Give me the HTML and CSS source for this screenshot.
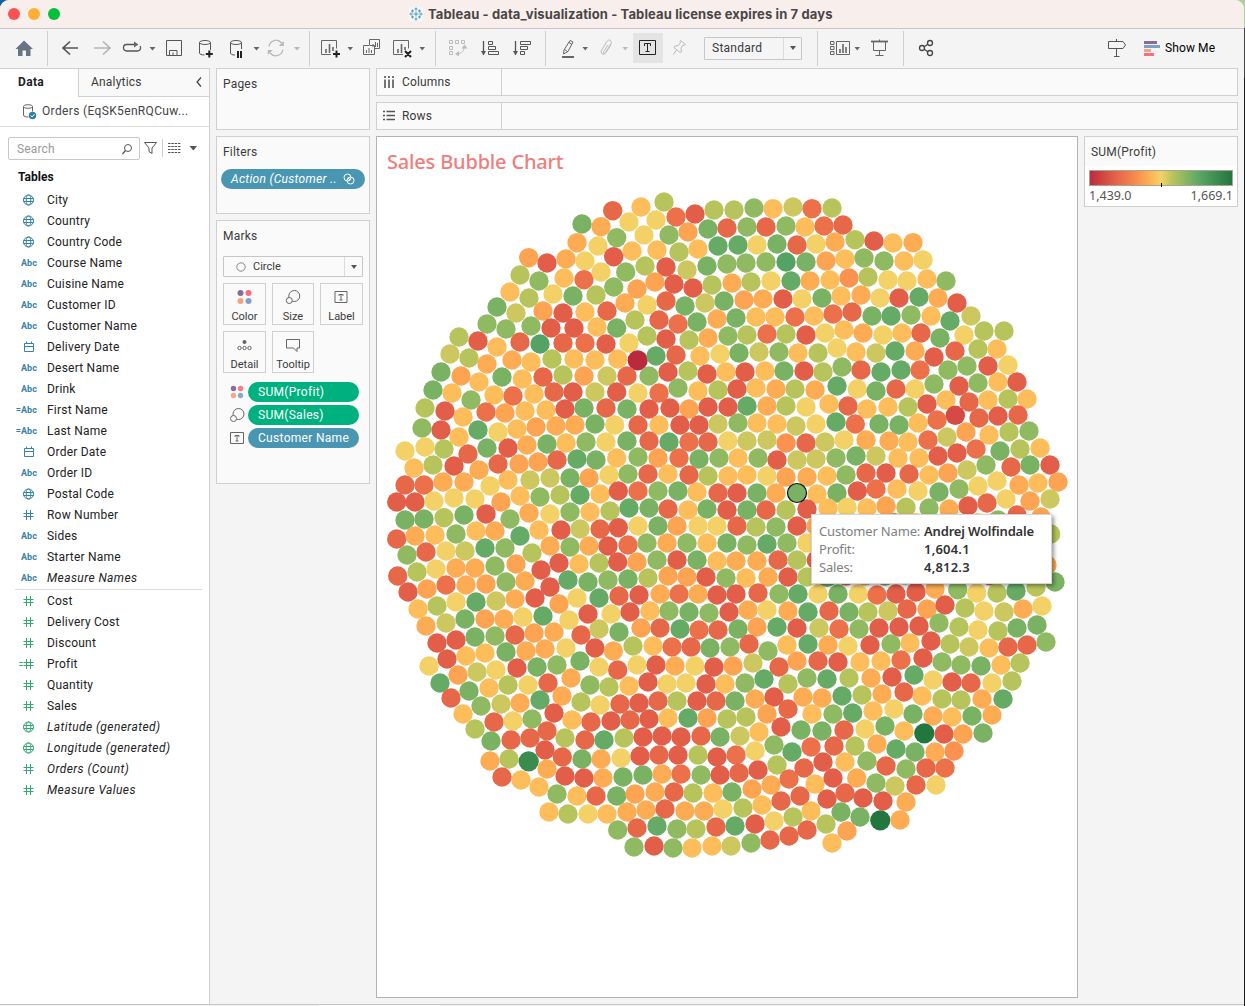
FILE: index.html
```html
<!DOCTYPE html>
<html lang="en">
<head>
<meta charset="utf-8">
<title>Tableau - data_visualization</title>
<link rel="stylesheet" href="styles.css">
</head>
<body>
<svg class="defs" width="0" height="0">
  <symbol id="globe" viewBox="0 0 20 21"><g fill="none" stroke="currentColor"><circle cx="10.500" cy="11" r="5"/><ellipse cx="10.500" cy="11" rx="2.300" ry="5"/><path d="M5.500 9.500h10M5.500 12.500h10"/></g></symbol>
  <symbol id="cal" viewBox="0 0 20 21"><path d="M6.500 7.500h9v8h-9zM6.500 10.500h9M8.500 5.500v2M13.500 5.500v2" fill="none" stroke="currentColor"/></symbol>
  <symbol id="hash" viewBox="0 0 20 21"><path d="M8.500 6v10M12.500 6v10M5.500 9.500h10M5.500 12.500h10" fill="none" stroke="currentColor"/></symbol>
  <symbol id="eqhash" viewBox="0 0 20 21"><path d="M8.500 6v10M12.500 6v10M5.500 9.500h10M5.500 12.500h10M1.500 9.500h3M1.500 12.500h3" fill="none" stroke="currentColor"/></symbol>
</svg>
<div class="window">
  <header class="titlebar">
    <svg viewBox="0 0 80 28" width="80" height="28"><circle cx="14" cy="14" r="6" fill="#ff5151"/><circle cx="34" cy="14" r="6" fill="#ffae33"/><circle cx="54" cy="14" r="6" fill="#00c039"/></svg>
    <div class="caption">
      <svg viewBox="0 0 14 14" width="14" height="14"><rect width="14" height="14" fill="#f4f6f7"/><g stroke="#4f9fc0"><path d="M7 4.500v5M4.500 7h5M7 .500v3M5.500 2h3M7 10.500v3M5.500 12h3M2 5.500v3M.500 7h3M12 5.500v3M10.500 7h3M3.500 2.500v3M2 4h3M10.500 2.500v3M9 4h3M3.500 8.500v3M2 10h3M10.500 8.500v3M9 10h3"/></g></svg>
      <span class="caption-text">Tableau - data_visualization - Tableau license expires in 7 days</span>
    </div>
  </header>

  <nav class="toolbar">
    <svg viewBox="0 29 47 39" width="47" height="39"><path d="M24 40.500l9 8.500h-2.500v7H26v-5.500h-3.500V56H18v-7h-2.500z" fill="#687383"/></svg>
    <i class="sep"></i>
    <svg viewBox="48 29 261 39" width="261" height="39">
      <g fill="none" stroke="#555">
        <path d="M70 41.500L63 48l7 6.500M63 48h15" stroke-width="1.700"/>
        <path d="M103 41.500l7 6.500-7 6.500M110 48H94" stroke="#b5b5b5" stroke-width="1.700"/>
        <path d="M135 44.500h-8.500a3 3.200 0 0 0 0 6.500H137.500c3 0 3.800-3 2.500-5" stroke-width="1.300"/>
        <path d="M166.500 40.500h15v15h-15zM169.500 55.500v-5h7.500v5M173 52.500v3"/>
        <ellipse cx="205" cy="42.500" rx="5.500" ry="2"/><path d="M199.500 42.500V53c0 1.200 2 2 5 2M210.500 42.500V50"/>
        <ellipse cx="236" cy="42.500" rx="5.500" ry="2"/><path d="M230.500 42.500V53c0 1.200 1.500 2 4.500 2M241.500 42.500V49"/>
        <path d="M209.300 50.500v7M205.800 54h7" stroke="#222" stroke-width="2"/>
        <path d="M238 51v7M241 51v7" stroke="#222" stroke-width="2"/>
        <path d="M269 46.500a7 7 0 0 1 12.500-3.500M282.800 49.500a7 7 0 0 1-12.500 3.500" stroke="#b8b8b8" stroke-width="1.300"/>
      </g>
      <path d="M134 41.500v6l4.500-3zM149.500 47h6l-3 3.500zM253.500 47h6l-3 3.500z" fill="#666"/>
      <path d="M294 47h6l-3 3.500zM283.800 41v5h-5zM267.800 55v-5h5z" fill="#b8b8b8"/>
    </svg>
    <i class="sep"></i>
    <svg viewBox="310 29 125 39" width="125" height="39">
      <g fill="none" stroke="#666">
        <path d="M331 54.500h-9.500v-14h15v8"/><path d="M403 54.500h-9.500v-14h15v8"/>
        <path d="M326 49v4M329.500 44v9M333 47v4M398 49v4M401.500 44v9M405 47v3" stroke-width="1.600"/>
        <path d="M369.500 45v-5.500h10v9h-5M369 45.500h-5.500v9h11v-9h-5"/>
        <path d="M366.500 50v3M369 48v5M371.500 50v3M373 44v3M375.500 42v5M377.500 43v4"/>
        <path d="M336.500 50.500v7M333 54h7M405 51l6 6M411 51l-6 6" stroke="#222" stroke-width="2"/>
      </g>
      <path d="M347.500 47h5.500l-2.800 3.500zM419.500 47h5.500l-2.800 3.500z" fill="#666"/>
    </svg>
    <i class="sep"></i>
    <svg viewBox="436 29 109 39" width="109" height="39">
      <g fill="none" stroke="#bbb"><path d="M449.500 40.500h3v3h-3zM455.500 40.500h3v3h-3zM461.500 40.500h3v3h-3zM449.500 46.500h3v3h-3zM449.500 51.500h3v3h-3zM464 47c0 4-2 6.500-7 7"/></g>
      <path d="M464.500 44.500l3 4h-6zM455 54l4-3v5.500z" fill="#bbb"/>
      <g fill="none" stroke="#555"><path d="M483.500 41v12M515.500 41v12" stroke-width="1.300"/><path d="M488.500 41.500h4v3h-4zM488.500 46.500h7v3h-7zM488.500 51.500h10v3h-10zM520.500 41.500h10v3h-10zM520.500 46.500h7v3h-7zM520.500 51.500h4v3h-4z"/></g>
      <path d="M481 51h5l-2.500 4.500zM513 51h5l-2.500 4.500z" fill="#555"/>
    </svg>
    <i class="sep"></i>
    <svg viewBox="546 29 87 39" width="87" height="39">
      <g fill="none" stroke="#666"><path d="M564 50l6-9.500 3 1.500-5 9.500-4.500 2.500zM564.500 49.500l3 2M569 42.500l3 2"/><path d="M562 57h12" stroke-width="2"/>
      <path d="M608 45l-4.500 7c-1 1.500.800 2.500 1.800 1l5.500-9c2-3.500-2-5.500-4-2.500l-4.800 8c-2.500 4 1.500 6.500 4 3l5-8" stroke="#bbb"/></g>
      <path d="M582.500 47h5.500l-2.800 3.500z" fill="#666"/><path d="M622.500 47h5.500l-2.800 3.500z" fill="#bbb"/>
    </svg>
    <svg class="pressed" viewBox="633 33 30 30" width="30" height="30"><path d="M639.500 40.500h16v14h-16z" fill="none" stroke="#222"/><path d="M644.500 46v-2.500h6V46M647.500 43.500v8M645.500 51.500h4" fill="none" stroke="#222"/></svg>
    <svg viewBox="663 29 41 39" width="41" height="39"><path d="M680.500 40.500l5 4-1.500 1-1-.500-2 3 .500 4-1.500.500-6-5 .500-1.300 4-.700 2-3-.500-1zM676.500 50l-3 4.500" fill="none" stroke="#bbb"/></svg>
    <div class="select fit"><span>Standard</span><i class="drop"></i></div>
    <i class="sep gap"></i>
    <svg viewBox="818 29 85 39" width="85" height="39">
      <g fill="none" stroke="#666"><path d="M830.500 41.500h3.500v3h-3.500zM830.500 46.500h3.500v3h-3.500zM830.500 51.500h3.500v3h-3.500zM836.500 41.500h13v13h-13z"/><path d="M840 49v4M843 44v9M846 47v6" stroke-width="1.600"/>
      <path d="M871 41.500h17" stroke-width="1.800"/><path d="M873.500 42v8.500h12V42M879.500 39.500v2M879.500 50.500v5M875.500 55.500h8"/></g>
      <path d="M854.500 47h5.500l-2.800 3.500z" fill="#666"/>
    </svg>
    <i class="sep"></i>
    <svg viewBox="904 29 60 39" width="60" height="39"><g fill="none" stroke="#444" stroke-width="1.300"><circle cx="930" cy="43" r="2.500"/><circle cx="922" cy="48" r="2.500"/><circle cx="930" cy="53" r="2.500"/><path d="M924.200 46.700l3.600-2.400M924.200 49.300l3.600 2.400"/></g></svg>
    <div class="grow"></div>
    <svg viewBox="1104 29 60 39" width="60" height="39"><path d="M1108.500 41.500h14.500l2.500 3.500-2.500 3.500h-14.500zM1116.500 39v2.500M1116.500 48.500v8M1114 56.500h5.500" fill="none" stroke="#555"/><path d="M1144 41h13v3h-13z" fill="#866e97"/><path d="M1144 45h16v3h-16z" fill="#7f9fca"/><path d="M1144 49h7v3h-7z" fill="#f5a280"/><path d="M1144 53h10v3h-10z" fill="#f96d7c"/></svg>
    <span class="showme">Show Me</span>
  </nav>

  <main class="workspace">
    <aside class="sidebar">
      <div class="tabs"><b class="tab on">Data</b><div class="tab"><span>Analytics</span><svg viewBox="0 0 8 12" width="8" height="12"><path d="M6 1.500L2 6l4 4.500" fill="none" stroke="#444" stroke-width="1.200"/></svg></div></div>
      <div class="source">
        <svg viewBox="20 98 18 26" width="18" height="26"><g fill="none" stroke="#666"><ellipse cx="28" cy="106.500" rx="4.500" ry="1.800"/><path d="M23.500 106.500V115c0 1.500 2 2 5 2M32.500 106.500v5"/></g><circle cx="32.500" cy="115.500" r="3.700" fill="#2f7fa6"/><path d="M30.700 115.500l1.400 1.500 2.400-2.800" fill="none" stroke="#fff"/></svg>
        <span class="source-name">Orders (EqSK5enRQCuw...</span>
      </div>
      <div class="find">
        <div class="search"><span>Search</span><svg viewBox="0 0 12 12" width="12" height="12"><circle cx="7" cy="5" r="3.500" fill="none" stroke="#555"/><path d="M4.500 7.500L1.500 11" stroke="#555" stroke-width="1.300"/></svg></div>
        <svg viewBox="140 137 69 23" width="69" height="23"><path d="M144.500 142.500h12l-4.500 5.500v5.500l-3-2V148z" fill="none" stroke="#555"/><path d="M162.500 139v18" stroke="#ccc"/><path d="M168 143.500h12.500M168 146.500h12.500M168 149.500h12.500M168 152.500h12.500" stroke="#555" stroke-width="1.100" stroke-dasharray="2.500 .800"/><path d="M189.500 146h7.500l-3.700 4.500z" fill="#555"/></svg>
      </div>
      <div class="fields">
        <b class="group">Tables</b>
        <ul class="dims">
          <li><svg><use href="#globe"/></svg>City</li>
          <li><svg><use href="#globe"/></svg>Country</li>
          <li><svg><use href="#globe"/></svg>Country Code</li>
          <li><b>Abc</b>Course Name</li>
          <li><b>Abc</b>Cuisine Name</li>
          <li><b>Abc</b>Customer ID</li>
          <li><b>Abc</b>Customer Name</li>
          <li><svg><use href="#cal"/></svg>Delivery Date</li>
          <li><b>Abc</b>Desert Name</li>
          <li><b>Abc</b>Drink</li>
          <li><b>=Abc</b>First Name</li>
          <li><b>=Abc</b>Last Name</li>
          <li><svg><use href="#cal"/></svg>Order Date</li>
          <li><b>Abc</b>Order ID</li>
          <li><svg><use href="#globe"/></svg>Postal Code</li>
          <li><svg><use href="#hash"/></svg>Row Number</li>
          <li><b>Abc</b>Sides</li>
          <li><b>Abc</b>Starter Name</li>
          <li class="it"><b>Abc</b>Measure Names</li>
        </ul>
        <ul class="measures">
          <li><svg><use href="#hash"/></svg>Cost</li>
          <li><svg><use href="#hash"/></svg>Delivery Cost</li>
          <li><svg><use href="#hash"/></svg>Discount</li>
          <li><svg><use href="#eqhash"/></svg>Profit</li>
          <li><svg><use href="#hash"/></svg>Quantity</li>
          <li><svg><use href="#hash"/></svg>Sales</li>
          <li class="it"><svg><use href="#globe"/></svg>Latitude (generated)</li>
          <li class="it"><svg><use href="#globe"/></svg>Longitude (generated)</li>
          <li class="it"><svg><use href="#hash"/></svg>Orders (Count)</li>
          <li class="it"><svg><use href="#hash"/></svg>Measure Values</li>
        </ul>
      </div>
    </aside>

    <section class="cards">
      <div class="card pages"><h3>Pages</h3></div>
      <div class="card filters"><h3>Filters</h3>
        <div class="pill blue action"><em>Action (Customer ..</em><svg viewBox="0 0 12 12" width="12" height="12"><g fill="none" stroke="#fff"><circle cx="4.500" cy="4.500" r="3.500"/><circle cx="7.500" cy="7.500" r="3.500"/><path d="M4.500 6.500l2-2M5.500 7.500l2-2"/></g></svg></div>
      </div>
      <div class="card marks"><h3>Marks</h3>
        <div class="select mark-type"><svg viewBox="0 0 10 10" width="10" height="10"><circle cx="5" cy="5" r="4.200" fill="none" stroke="#888"/></svg><span>Circle</span><i class="drop"></i></div>
        <div class="props">
          <div class="prop"><svg viewBox="0 0 16 16" width="16" height="16"><circle cx="3.500" cy="4" r="3" fill="#866e97"/><circle cx="11.500" cy="4" r="3" fill="#f96d7c"/><circle cx="3.500" cy="12" r="3" fill="#f5a280"/><circle cx="11.500" cy="12" r="3" fill="#7f9fca"/></svg><span>Color</span></div>
          <div class="prop"><svg viewBox="0 0 16 16" width="16" height="16"><g fill="#fafafa" stroke="#666"><circle cx="9.300" cy="7" r="5.500"/><circle cx="4.300" cy="11.500" r="3"/></g></svg><span>Size</span></div>
          <div class="prop"><svg viewBox="0 0 16 16" width="16" height="16"><path d="M1 2.500h12v11h-12zM5 7V5.500h4V7M7 5.500v5.500M5.500 11h3" fill="none" stroke="#666"/></svg><span>Label</span></div>
          <div class="prop"><svg viewBox="0 0 16 16" width="16" height="16"><g fill="none" stroke="#666"><circle cx="2.500" cy="11" r="1.700"/><circle cx="7.500" cy="11" r="1.700"/><circle cx="12.500" cy="11" r="1.700"/></g><circle cx="7.500" cy="5" r="2" fill="#666"/></svg><span>Detail</span></div>
          <div class="prop"><svg viewBox="0 0 16 16" width="16" height="16"><path d="M1.500 2.500h13v8.500h-2.500v3.500L8.500 11h-7z" fill="none" stroke="#666"/></svg><span>Tooltip</span></div>
        </div>
        <div class="encodings">
          <div class="enc"><svg viewBox="0 0 16 16" width="16" height="16"><circle cx="4.500" cy="4.500" r="2.700" fill="#866e97"/><circle cx="11.500" cy="4.500" r="2.700" fill="#f97a88"/><circle cx="4.500" cy="11.500" r="2.700" fill="#f5a98a"/><circle cx="11.500" cy="11.500" r="2.700" fill="#8aaace"/></svg><div class="pill green">SUM(Profit)</div></div>
          <div class="enc"><svg viewBox="0 0 16 16" width="16" height="16"><g fill="#fafafa" stroke="#666"><circle cx="9.500" cy="7" r="5.500"/><circle cx="4.500" cy="11.500" r="3"/></g></svg><div class="pill green">SUM(Sales)</div></div>
          <div class="enc"><svg viewBox="0 0 16 16" width="16" height="16"><path d="M1.500 2.500h13v11h-13zM6 7V5.500h4V7M8 5.500v5.500M6.500 11h3" fill="none" stroke="#666"/></svg><div class="pill blue">Customer Name</div></div>
        </div>
      </div>
    </section>

    <section class="main">
      <div class="shelf"><div class="shelf-label"><svg viewBox="0 0 12 12" width="12" height="12"><path d="M2 3.500v8.500M6 3.500v8.500M10 3.500v8.500M2 0v2M6 0v2M10 0v2" stroke="#555" stroke-width="1.600"/></svg>Columns</div></div>
      <div class="shelf"><div class="shelf-label"><svg viewBox="0 0 12 12" width="12" height="12"><path d="M3.500 1.500H12M3.500 5.500H12M3.500 9.500H12M0 1.500h2M0 5.500h2M0 9.500h2" stroke="#555" stroke-width="1.600"/></svg>Rows</div></div>
      <div class="canvas">
        <div class="viz">
          <h1>Sales Bubble Chart</h1>
          <svg id="bubbles" class="bubbles" viewBox="380 185 697 690"></svg>
          <dl class="tip">
            <dt>Customer Name:</dt><dd class="who">Andrej Wolfindale</dd>
            <dt>Profit:</dt><dd>1,604.1</dd>
            <dt>Sales:</dt><dd>4,812.3</dd>
          </dl>
        </div>
        <div class="legend"><h3>SUM(Profit)</h3><div class="ramp"><i class="tick"></i></div><div class="range"><span>1,439.0</span><span>1,669.1</span></div></div>
      </div>
    </section>
  </main>
  <footer class="sheets"><i></i></footer>
</div>
<script src="bubbles.js"></script>
</body>
</html>
```
FILE: styles.css
```css
* { box-sizing: border-box; }
body { margin: 0; width: 1245px; height: 1006px; overflow: hidden; font: 12px/16px Roboto, "Liberation Sans", sans-serif; color: #3a3a3a; background: linear-gradient(90deg, #1264a0 0 20px, transparent 20px), linear-gradient(#a9d39c 0 28px, #444 28px 78px, #1b1b1b 78px); }
h1, h3, ul, dl, dd { margin: 0; padding: 0; font-weight: normal; }
.defs { position: absolute; }
svg { display: block; flex: none; }
.window { width: 1244px; height: 1006px; background: #f4f4f4; border-radius: 9px 9px 0 0; overflow: hidden; display: flex; flex-direction: column; }
.titlebar { height: 29px; flex: none; background: #f8efec; border-bottom: 1px solid #c9c5c4; display: flex; }
.caption { flex: 1; padding: 0 0 0 329px; display: flex; align-items: center; gap: 5px; }
.caption-text { font: bold 13px/16px Inter, sans-serif; letter-spacing: .12px; color: #494645; white-space: nowrap; padding-bottom: 1px; }
.toolbar { height: 39px; flex: none; display: flex; align-items: center; }
.sep { width: 1px; height: 35px; background: #cfcfcf; flex: none; }
.gap { margin-left: 15px; }
.pressed { background: #e4e4e4; margin-bottom: 1px; }
.select { border: 1px solid #c6c6c6; background: #fafafa; border-radius: 1px; display: flex; align-items: center; }
.fit { width: 98px; height: 23px; flex: none; background: #f5f5f5; padding: 0 0 0 7px; margin-bottom: 1px; }
.select span { flex: 1; letter-spacing: .25px; }
.drop { width: 18px; height: 100%; border-left: 1px solid #dcdcdc; display: flex; align-items: center; justify-content: center; }
.drop::after { content: ""; border: 3.500px solid transparent; border-top: 4px solid #555; border-bottom: 0; }
.grow { flex: 1; }
.showme { width: 80px; padding: 0 0 1px 1px; color: #000; letter-spacing: .1px; }
.workspace { flex: 1; display: flex; min-height: 0; }
.sidebar { width: 210px; flex: none; background: #fff; border-right: 1px solid #cfcfcf; border-top: 1px solid #cfcfcf; }
.tabs { display: flex; height: 28px; }
.tab { flex: 1; display: flex; align-items: center; justify-content: space-between; padding: 0 6px 1px 12px; border-left: 1px solid #d0d0d0; border-bottom: 1px solid #d0d0d0; background: #f9f9f9; letter-spacing: .2px; }
.tab.on { flex: 0 0 78px; padding: 0 0 3px 18px; background: #fff; border: 0; color: #222; justify-content: flex-start; letter-spacing: .35px; }
.source { height: 30px; border-bottom: 1px solid #ddd; display: flex; align-items: center; padding: 0 0 1px 20px; gap: 4px; color: #444; letter-spacing: .35px; }
.find { display: flex; padding: 10px 0 0 8px; }
.search { width: 132px; height: 23px; border: 1px solid #c8c8c8; border-radius: 2px; display: flex; align-items: center; justify-content: space-between; padding: 0 6px 0 8px; color: #999; letter-spacing: .15px; }
.group { display: block; padding: 9px 0 4px 18px; color: #111; line-height: 16px; }
.dims, .measures { list-style: none; }
.dims { color: #3783a8; }
.measures { color: #35a878; border-top: 1px solid #dcdcdc; margin: 1px 7px 0 15px; }
.fields li { height: 21px; display: flex; align-items: center; white-space: nowrap; letter-spacing: .22px; -webkit-text-fill-color: #222; }
.fields li svg { width: 20px; height: 21px; margin: 0 9px 0 18px; }
.measures li svg { margin-left: 3px; }
.fields li b { width: 37px; margin-right: 10px; text-align: right; font: bold 9px/21px Roboto, sans-serif; padding-top: 1px; letter-spacing: .1px; -webkit-text-fill-color: #3783a8; }
.fields li.it { font-style: italic; letter-spacing: .42px; }
.cards { width: 166px; flex: none; padding: 0 6px; display: flex; flex-direction: column; gap: 6px; }
.card { border: 1px solid #cfcfcf; background: #fafafa; padding: 7px 6px; flex: none; }
h3 { font-size: 12px; line-height: 16px; letter-spacing: .2px; }
.pages { height: 62px; }
.filters { height: 78px; }
.marks { height: 264px; }
.pill { height: 20px; border-radius: 10px; color: #fff; line-height: 20px; padding-left: 10px; white-space: nowrap; letter-spacing: .3px; }
.blue { background: #4996b3; }
.green { background: #00b180; }
.action { margin: 9px -2px 0; width: 144px; display: flex; align-items: center; justify-content: space-between; padding-right: 10px; }
.mark-type { height: 21px; margin-top: 12px; font-size: 11px; width: 140px; padding-left: 12px; gap: 7px; }
.mark-type span { letter-spacing: 0; }
.props { display: grid; grid-template-columns: 43px 42px 43px; gap: 6px; margin-top: 6px; width: 140px; }
.prop { height: 42px; border: 1px solid #cfcfcf; display: flex; flex-direction: column; align-items: center; padding-top: 5px; font-size: 11px; line-height: 14px; gap: 5px; }
.encodings { margin-top: 9px; display: grid; gap: 3px; padding-left: 6px; }
.enc { display: flex; align-items: center; gap: 3px; }
.enc .pill { width: 111px; }
.main { flex: 1; display: flex; flex-direction: column; gap: 6px; padding-right: 6px; min-width: 0; }
.shelf { height: 28px; flex: none; border: 1px solid #cfcfcf; background: #fafafa; }
.shelf-label { width: 125px; height: 26px; border-right: 1px solid #cfcfcf; display: flex; align-items: center; gap: 7px; padding-left: 6px; letter-spacing: .15px; }
.canvas { display: flex; gap: 6px; }
.viz { width: 702px; height: 862px; border: 1px solid #b3b3b3; background: #fff; position: relative; }
.viz h1 { font: 500 20px/28px "Noto Sans", sans-serif; letter-spacing: -.18px; color: #f07c7c; padding: 11px 0 0 10px; height: 48px; }
.bubbles { margin-left: 3px; width: 697px; height: 690px; }
.tip { position: absolute; left: 434px; top: 377px; width: 241px; height: 70px; border: 1px solid #d4d4d4; background: #fff; box-shadow: 2px 2px 4px rgba(0,0,0,.4); padding: 7px 0 0 7px; display: grid; grid-template-columns: 105px 1fr; grid-auto-rows: 18px; font: 13px/18px "Noto Sans", sans-serif; white-space: nowrap; }
.tip dt { color: #808080; letter-spacing: -.16px; }
.tip dd { color: #333; font-weight: 600; letter-spacing: .2px; }
.tip .who { letter-spacing: -.17px; }
.legend { width: 154px; height: 71px; border: 1px solid #cfcfcf; background: linear-gradient(#fafafa 29px, #fff 29px); padding: 7px 4px 0; }
.legend h3 { padding-left: 2px; }
.ramp { height: 16px; margin-top: 10px; width: 144px; border: 1px solid #a9a595; position: relative; background: linear-gradient(90deg, #be2a3e, #e25f48 17%, #f88f4d 33%, #fdb456 43%, #f4d166 50%, #b9c45c 58%, #90b960 66%, #57a565 78%, #22763f); }
.tick { position: absolute; left: 71px; top: 12px; width: 1px; height: 4px; background: #000; }
.range { display: flex; justify-content: space-between; font: 12.500px/20px "Noto Sans", sans-serif; color: #555; width: 144px; }
.sheets { height: 2px; flex: none; border-top: 1px solid #c4c4c4; padding-left: 318px; }
.sheets i { display: block; width: 122px; height: 1px; background: #fff; }
```
FILE: bubbles.js
```js
// Packed bubbles, grouped by block. Positions are in thirds of a pixel from the
// block's origin, followed by the letter of the colour step.
const ramp = {
  A: '#bb293d', B: '#d64a45', C: '#e25e48', E: '#e76848', F: '#ec7049', H: '#fb9250',
  I: '#fca452', J: '#fdac54', K: '#fdbd5b', Y: '#f3d166', L: '#ccc75f', M: '#b7c45b',
  N: '#8fba61', P: '#7ab263', Q: '#66ab65', S: '#55a265', T: '#3a8b50', U: '#22773f'
};
const blocks = [
[380, 185, `698,77E 606,117P 663,125J 591,173J 654,183Y 446,218I 501,234C 558,222J 615,228Y 701,215C
420,270M 477,288N 552,279K 612,284F 663,261Y 390,321K 447,339M 519,327Y 579,333P 648,330M 701,306N
351,366P 408,384L 489,378I 549,384C 615,381K 681,378E 321,417N 378,432N 453,423N 513,429C 582,429C 651,426K
237,456M 294,468C 351,486K 420,471E 480,477S 549,474E 615,474F 678,477C
210,507L 267,519M 321,537J 396,525J 453,531K 516,522M 582,522K 645,525K
183,561P 243,573I 297,591K 366,576P 427,582K 489,576E 549,570M 612,573I 681,573L
159,615P 216,624K 273,645N 342,630K 399,633F 462,627K 522,621E 579,621C 645,621L
135,669M 195,678C 249,696K 318,681F 375,684I 435,678K 498,675K 555,672C 612,669P 678,669E
126,729N 183,735C 237,756K 294,735Q 354,741Y 411,732K 468,726I 528,723J 585,720J 645,717P 704,720Y
75,798Y 135,786Y 192,792M 264,807E 321,789P 384,789C 441,780J 501,777P 558,774K 618,771N 678,771Y
102,849K 159,840M 222,843C 297,855J 354,837E 417,837I 474,831I 531,825E 591,822Q 648,825P
75,900E 132,900F 189,891J 252,891J 330,903Y 384,885K 450,885L 510,879L 570,879P 627,879I 687,870Y
50,951C 105,951C 162,948Y 222,939Y 285,942Y 363,951I 420,933K 480,936N 540,930M 600,930Q 660,927K
75,1005P 132,1002P 192,998M 252,990P 318,987C 390,1002N 447,984J 510,987Y 570,981N 630,981K 690,978M`],
[615, 185, `147,51M 78,66K 183,96F 240,87C 297,75M 357,75M 417,69N 474,71K 534,66L 591,71F 651,69M
42,111Y 123,105Y 5,158N 87,150Y 162,150N 219,141I 279,132P 336,129E 396,126N 453,126E 513,123N 570,126K 627,123F 684,120E
51,198K 126,195K 192,201M 249,192K 309,183Q 369,180Q 426,180Y 486,177P 546,180E 603,177Y 660,171J
32,261N 90,243M 153,246C 216,255L 276,243P 336,237N 393,234N 453,231N 513,231S 573,231P 633,228I 690,222K
66,312I 120,291I 177,297C 234,309C 291,300M 351,294J 408,291M 468,288Y 528,288Q 585,288J 645,285K 702,279H
30,354J 96,360Y 153,348E 210,363P 270,354L 327,348P 387,345I 444,342J 504,342C 561,342Y 621,339P 678,333K
5,429P 60,405M 132,405E 189,417F 246,411P 306,402J 363,399P 423,396K 480,396K 540,396F 597,393K 654,387F
42,474Y 96,453M 153,462C 222,465M 279,459J 339,453N 396,450M 456,447F 513,447M 573,450C 630,444Y 687,435K
8,522K 68,526A 123,513Q 183,510E 255,513K 315,507Y 372,504P 432,501L 492,501N 549,504K 609,504M 666,489Y
36,573E 102,573N 159,561C 219,558M 276,567C 333,561K 390,561C 450,558K 507,558P 567,558C 624,561M 681,546N
5,621C 69,624Y 132,624F 189,609N 249,618K 309,615M 366,612C 423,609K 483,612J 540,612M 600,615J 666,603Q
36,672P 102,672C 165,669C 222,672I 279,666C 339,666C 396,663Q 456,663J 513,663M 573,666Y 642,657K 699,663E
69,720E 132,720K 195,720C 252,720C 309,717L 369,714N 426,714K 486,717K 543,723L 603,717Y 663,711Q
36,768P 102,768E 162,771Q 222,771F 279,771E 339,768Y 396,768L 456,765L 513,774H 573,774E 630,771L 687,765Y
5,819K 69,816N 129,819I 192,819F 252,822P 312,819N 369,819K 429,819N 486,825C 546,825L 603,822L 663,819N
39,867N 99,867E 159,867K 222,870E 279,873M 339,873K 396,870K 456,873Y 513,876I 576,876J 636,873K 693,870N
10,918C 69,918F 129,918N 189,918P 246,921K 309,924E 366,924C 426,924P 483,924J 606,927K 666,924P
42,969Q 102,969P 159,972E 219,975K 276,972P 336,975C 396,975P 453,975E 513,975M 576,972C 639,969K 696,967Y`],
[850, 185, `15,164M 72,168C 129,174K 189,173J 42,219N 102,228N 162,228K 219,225Y 54,276M 114,285Y 171,288Y 231,282K 288,288N
33,330J 90,339Y 147,339C 207,336Q 264,339J 321,354C 6,381E 66,393P 123,393Q 183,390N 243,393K 300,408Q 363,393L
39,444J 99,450Y 156,444K 213,444E 270,459P 342,450Y 402,438M 462,438M 18,501K 78,504L 135,498Q 195,498J 252,516C 315,498E 384,492M 441,492K
33,555E 93,561Q 153,555Q 210,555F 294,555N 351,543N 414,543C 474,540Y 22,612Y 78,618P 138,612E 195,612Y 252,597N 327,603C 384,594N 444,591K 501,591C
51,672K 114,666K 174,666M 231,657C 288,645K 357,651E 414,645K 474,642M 531,642K 16,717F 87,717P 147,720P 204,714K 261,705F 316,691B 387,699E 444,693C 504,690E
48,765J 117,768J 174,771K 234,765F 291,756L 348,741I 417,750K 477,741M 537,738N 18,813P 78,813L 144,819K 207,819K 264,813C 321,804C 378,792F 450,798P 510,792M 570,789K
48,864E 108,864C 177,867E 237,870K 294,864I 351,855L 408,840N 483,846E 540,840P 600,840C 22,918C 78,912F 141,912K 204,918Y 267,921P 327,912N 384,903Y 441,888Y 507,900J 564,894K 624,891I
51,969K 108,963I 168,967M 237,969N 297,972J 354,963C 411,954E 468,942Y 540,948I 600,942L 133,1013C 197,1013K 384,1013Y 444,1005N 501,990E 573,996I 602,1047M 591,1140J 615,1191P`],
[380, 520, `50,57E 105,48J 165,45K 228,42N 288,33K 345,33J 420,48Q 477,30K 543,30C 600,27L 660,27E
81,105N 138,96E 198,93Y 255,93L 315,84Q 375,84N 456,99M 510,78J 570,81N 627,78J 684,78C
53,168E 111,156M 168,147Y 228,144J 285,144J 345,138N 408,132I 483,150C 537,129C 597,132K 657,129M
84,216C 141,207I 198,195F 258,195J 318,192I 378,186N 435,183J 510,201C 564,180Q 624,186P 684,180N
114,267K 171,258M 228,246Y 288,246Q 348,243L 405,237J 465,234C 537,252I 591,234Y 657,234Q
138,318J 198,309L 255,297P 315,297I 372,297J 429,291Y 489,288Q 567,300Y 624,282C 693,282Y
171,369C 228,360C 285,351P 345,348N 405,345E 462,339I 522,336J 603,345E 657,327L
147,438Y 201,417C 258,408K 315,399K 378,396P 438,393J 495,387J 558,384Y 645,384C 700,393J
234,465I 291,456L 348,450Y 411,444C 471,441P 531,435N 600,423P 657,441Y
180,489Q 267,513P 327,504K 384,495M 444,495Y 504,489E 573,474J 630,495N 687,501M
213,534E 303,558N 363,552L 420,549J 480,540Q 546,528J 603,546M 660,555Y
249,582K 342,606E 399,603Y 456,597N 522,579C 576,600K 633,606E 693,603C
285,627M 333,663P 393,660E 450,654E 501,633E 555,654M 615,660E 672,660Q
330,723J 387,717M 446,724T 495,690C 547,711E 606,717P 663,717J 366,771E 423,780K 501,747J 477,801K 555,768C 612,774C 669,774J
531,822N 591,828K 648,828E 507,876K 564,882M 624,882Y 681,882K`],
[615, 520, `10,23C 69,18Y 129,18P 186,18I 249,18Y 306,18Y 366,18E 423,21M 483,21N 546,18C 603,18I
39,75F 96,69N 156,69J 216,69N 276,69K 336,69P 396,75N 456,72Q 516,69N 576,69Y
8,126C 66,126I 126,120N 186,120C 246,120P 306,123K 363,123J 426,123J 489,120E 546,120M 604,120C
39,177P 99,174M 159,168I 216,171I 273,171C 333,174N 393,174K 459,171J 519,171C 576,171M 636,172Q 693,168E
12,228E 72,225C 135,222J 192,222F 249,222J 306,225C 363,222C 429,219E 492,222N 549,222Q 609,222Y 669,222P
45,276C 105,273K 162,273N 222,276P 282,279N 342,276C 399,270J 456,270Y 519,273J 579,276Q 642,273E 702,276P
12,336P 78,324I 135,324E 195,327Q 252,330F 309,330E 369,327P 426,321I 486,321Q 546,324C 612,324L 672,327F
54,378M 114,378K 171,381F 228,381E 285,384P 345,381N 402,372E 459,393N 516,375K 579,372Q 639,375J 699,378Y
66,435Y 123,435C 180,438J 240,438Y 297,441C 354,438I 414,429L 447,477Q 492,441E 546,423I 609,423E 669,426C
8,450E 42,498K 99,486C 156,492Y 213,489Y 273,492C 330,492K 390,489N 519,492M 576,474N 636,477Q 702,474M
15,552E 72,549C 129,543E 186,543M 246,543C 303,543E 360,543P 420,537J 477,531C 519,567E 564,531J 621,534J 681,528Q
45,600E 102,597C 159,594K 219,594Q 276,594I 336,597M 393,591M 456,582I 432,636K 498,621C 591,582K 654,582N
27,654M 84,651C 141,648C 198,651C 258,648E 315,651P 375,648L 477,675N 558,630P 621,633P 687,630E
18,714Y 75,708C 132,705E 189,705C 249,705M 306,711C 363,705F 420,693Y 486,735M 531,696Q 588,681F 657,678E
24,771P 84,765P 141,762J 198,762F 258,765N 315,765C 372,759E 429,750C 522,777F 567,744E 624,726C 690,726K
5,828P 60,822I 120,816J 177,816E 234,819M 294,819K 351,816P 411,807I 468,795J 600,792K 654,774C
36,876J 93,870J 150,867E 210,873J 267,873J 324,867Y 384,864M 441,855K 498,843E 555,828E 636,837C 690,819E
8,930N 66,924E 126,918Q 186,927N 243,927M 303,921E 360,918Q 420,912C 477,903Y 534,891M 588,873K 678,876P
57,981N 117,978C 174,984N 231,984K 291,978K 348,978L 408,969N 465,960E 522,948E 576,930E 633,912M 696,933I 651,969K`],
[850, 520, `45,168I 105,168P 165,165M 420,167C 25,222Y 81,225F 138,222C 198,216C 255,207J 323,209N 380,219Y 441,219M 498,213Q 558,201M
54,276M 114,273L 171,267E 231,267I 285,255C 345,264M 402,273Y 462,276L 519,267J 576,258Y
27,327N 87,324C 147,321C 207,318C 267,309N 327,321M 384,330Y 444,333M 501,324P 561,315P
60,375C 123,372N 180,369K 243,363C 300,372M 357,381L 417,384K 474,381E 531,375E 588,366N
30,426K 93,423K 153,420F 219,414C 276,426N 333,435N 393,438P 453,435K 510,429M
63,474J 126,471C 192,465Q 249,480Y 306,486C 363,489E 426,489Y 486,483M
36,525M 96,522J 162,516E 216,528K 276,537M 333,540M 396,537J 459,537Q
8,579Q 69,573K 132,567Y 189,582P 249,588J 306,591K 366,588P 426,585J
45,627Y 105,618P 162,633K 223,640U 282,642C 339,642I 399,639P 15,678M 81,672J 138,687Q 195,696P 255,696J 312,693H
51,723N 108,738E 168,747N 228,744E 285,744F 20,774J 78,789N 135,798L 198,795E 258,795Y
39,834C 99,843C 168,846J 30,891P 91,901U 150,900J`]
];
let marks = '';
for (const [ox, oy, list] of blocks) {
  for (const m of list.split(/\s+/)) {
    const [, x, y, c] = m.match(/(\d+),(\d+)(\w)/);
    const r = 'ATU'.includes(c) ? 10.1 : 9.7;
    marks += `<circle cx="${(ox + x / 3).toFixed(1)}" cy="${(oy + y / 3).toFixed(1)}" r="${r}" fill="${ramp[c]}"/>`;
  }
}
marks += '<circle cx="797" cy="493" r="9.500" fill="#7ab263" stroke="#111" stroke-width="1.200"/>';
document.getElementById('bubbles').innerHTML = marks;
```
